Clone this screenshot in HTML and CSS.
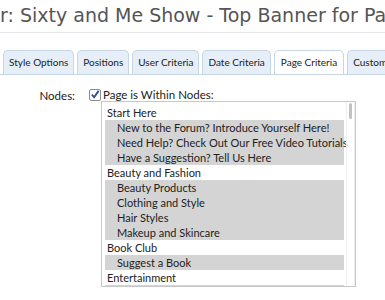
FILE: index.html
```html
<!DOCTYPE html>
<html lang="en">
<head>
    <meta charset="UTF-8">
    <title>Sixty and Me Show - Top Banner</title>
    <link rel="stylesheet" href="styles.css">
</head>
<body>
<h1 class="title">r: Sixty and Me Show - Top Banner for Pa</h1>

<ul class="tabs">
    <li class="tab">Style Options</li>
    <li class="tab">Positions</li>
    <li class="tab">User Criteria</li>
    <li class="tab">Date Criteria</li>
    <li class="tab tab-active">Page Criteria</li>
    <li class="tab">Custom</li>
</ul>

<div class="form-row">
    <div class="row-label">Nodes:</div>
    <div class="row-input">
        <label class="check">
            <span class="check-box">
                <svg width="11" height="11" viewBox="0 0 11 11"><path d="M2 5.5 L4.5 8.5 L9.5 1.5" fill="none" stroke="#2a4f8f" stroke-width="2"/></svg>
            </span>
            Page is Within Nodes:
        </label>
        <div class="node-list">
            <div class="node-items">
                <div class="node">Start Here</div>
                <div class="node node-sel node-child">New to the Forum? Introduce Yourself Here!</div>
                <div class="node node-sel node-child">Need Help? Check Out Our Free Video Tutorials</div>
                <div class="node node-sel node-child">Have a Suggestion? Tell Us Here</div>
                <div class="node">Beauty and Fashion</div>
                <div class="node node-sel node-child">Beauty Products</div>
                <div class="node node-sel node-child">Clothing and Style</div>
                <div class="node node-sel node-child">Hair Styles</div>
                <div class="node node-sel node-child">Makeup and Skincare</div>
                <div class="node">Book Club</div>
                <div class="node node-sel node-child">Suggest a Book</div>
                <div class="node">Entertainment</div>
                <div class="node node-sel node-child"></div>
            </div>
            <div class="scroll-track"><div class="scroll-thumb"></div></div>
        </div>
    </div>
</div>
</body>
</html>
```

FILE: styles.css
```css
body{
    margin: 0;
    background-color: white;
    font-family: "Lato", sans-serif;
    color: #222;
    overflow: hidden;
}
.title{
    margin: 0;
    padding: 4px 0 6px 0;
    font-family: "DejaVu Sans", sans-serif;
    font-weight: normal;
    font-size: 19px;
    color: #555;
    white-space: nowrap;
    overflow: hidden;
    border-bottom: 1px solid #e4e8ec;
}
.tabs{
    list-style: none;
    margin: 17px 0 0 0;
    padding: 0 0 0 3px;
    display: flex;
    gap: 3px;
    border-bottom: 1px solid #c6d6e6;
    white-space: nowrap;
    overflow: hidden;
}
.tab{
    font-size: 10px;
    line-height: 12px;
    padding: 5px 5px 6px 5px;
    background-color: #e6eef7;
    border: 1px solid #c6d6e6;
    border-bottom: none;
    border-radius: 5px 5px 0 0;
    color: #222;
}
.tab-active{
    background-color: white;
    margin-bottom: -1px;
    padding: 5px 6px 7px 6px;
}
.form-row{
    display: flex;
    margin-top: 13px;
}
.row-label{
    width: 75px;
    text-align: right;
    font-size: 11.5px;
    padding-top: 1px;
}
.row-input{
    margin-left: 14px;
}
.check{
    display: flex;
    align-items: center;
    gap: 2px;
    font-size: 11.5px;
}
.check-box{
    width: 10px;
    height: 10px;
    border: 1px solid #8a8a8a;
    border-radius: 2px;
    background-color: white;
    display: flex;
}
.check-box svg{
    margin: -1px 0 0 0;
}
.node-list{
    margin: 0 0 0 12px;
    width: 253px;
    height: 184px;
    border: 1px solid #c8c8c8;
    display: flex;
    overflow: hidden;
}
.node-items{
    width: 239px;
    padding: 3px 0 0 3px;
}
.node{
    height: 15px;
    line-height: 15px;
    font-size: 11px;
    padding-left: 2px;
    white-space: nowrap;
}
.node-sel{
    background-color: #d4d4d4;
}
.node-child{
    padding-left: 12px;
}
.scroll-track{
    width: 11px;
    border-left: 1px solid #eeeeee;
    border-right: 1px solid #eeeeee;
    margin-left: 2px;
}
.scroll-thumb{
    margin: 1px 2px 0 2px;
    height: 16px;
    border-radius: 4px;
    background-color: #c2c2c2;
}
```
